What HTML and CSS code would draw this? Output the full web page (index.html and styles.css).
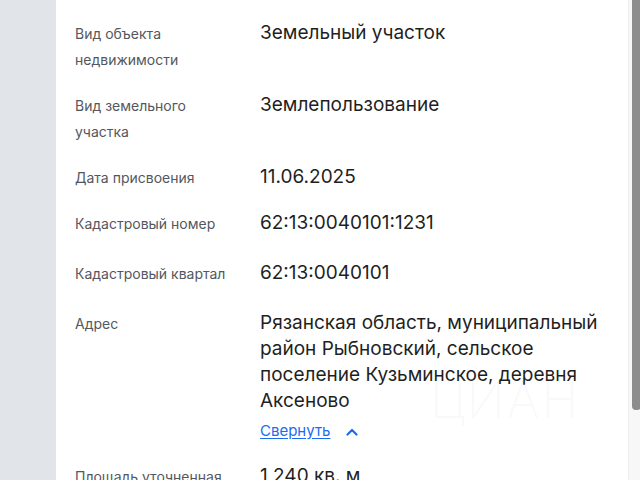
FILE: index.html
```html
<!DOCTYPE html>
<html lang="ru">
<head>
<meta charset="utf-8">
<link rel="stylesheet" href="styles.css">
</head>
<body>
<div class="page">
  <div class="side"></div>
  <main class="card">
    <div class="row">
      <div class="label">Вид объекта<br>недвижимости</div>
      <div class="value">Земельный участок</div>
    </div>
    <div class="row">
      <div class="label">Вид земельного<br>участка</div>
      <div class="value">Землепользование</div>
    </div>
    <div class="row">
      <div class="label">Дата присвоения</div>
      <div class="value">11.06.2025</div>
    </div>
    <div class="row row-tall">
      <div class="label">Кадастровый номер</div>
      <div class="value">62:13:0040101:1231</div>
    </div>
    <div class="row row-tall">
      <div class="label">Кадастровый квартал</div>
      <div class="value">62:13:0040101</div>
    </div>
    <div class="row">
      <div class="label">Адрес</div>
      <div class="value">
        <div class="address">Рязанская область, муниципальный район Рыбновский, сельское поселение Кузьминское, деревня Аксеново</div>
        <a class="toggle" href="#"><span class="toggle-text">Свернуть</span><svg class="chev" width="12" height="8" viewBox="0 0 12 8"><polyline points="1.5,6.5 6,2 10.5,6.5" fill="none" stroke="#1a6cf0" stroke-width="2.2" stroke-linecap="round" stroke-linejoin="round"/></svg></a>
      </div>
    </div>
    <div class="row">
      <div class="label">Площадь уточненная</div>
      <div class="value">1 240 кв. м</div>
    </div>
    <div class="watermark">ЦИАН</div>
  </main>
  <div class="scrollbar"><div class="thumb"></div></div>
</div>
</body>
</html>
```

FILE: styles.css
```css
html, body {
  margin: 0;
  padding: 0;
  height: 100%;
  overflow: hidden;
}
body {
  font-family: Inter, "Noto Sans", sans-serif;
  background: #e1e4e9;
}
.page {
  display: flex;
  height: 480px;
}
.side {
  width: 56px;
  flex: none;
  background: #e1e4e9;
}
.card {
  position: relative;
  flex: 1;
  background: #fff;
  padding: 21px 20px 0 19px;
  display: flex;
  flex-direction: column;
  gap: 20px;
}
.row {
  display: grid;
  grid-template-columns: 185px 1fr;
  align-items: start;
}
.row-tall {
  min-height: 30px;
}
.label {
  font-size: 14px;
  line-height: 26px;
  color: #54575e;
}
.value {
  font-size: 19px;
  line-height: 26px;
  color: #1f1f1f;
  margin-top: -1px;
}
.address {
  width: 348px;
}
.toggle {
  display: inline-flex;
  align-items: center;
  gap: 16px;
  margin-top: 4px;
  text-decoration: none;
}
.toggle-text {
  font-size: 15px;
  line-height: 26px;
  color: #1a6cf0;
  text-decoration: underline;
  text-underline-offset: 2px;
}
.chev {
  display: block;
  margin-top: 1px;
}
.watermark {
  position: absolute;
  left: 374px;
  top: 372px;
  font-size: 50px;
  line-height: 56px;
  font-weight: 200;
  letter-spacing: 2px;
  color: rgba(0, 0, 0, 0.025);
  pointer-events: none;
}
.scrollbar {
  width: 13px;
  flex: none;
  background: #f7f7f7;
  border-left: 1px solid #efefef;
  box-sizing: border-box;
  display: flex;
  justify-content: flex-end;
}
.thumb {
  width: 9px;
  height: 410px;
  background: #8d8d8d;
  border-radius: 0 0 4px 4px;
}
```
